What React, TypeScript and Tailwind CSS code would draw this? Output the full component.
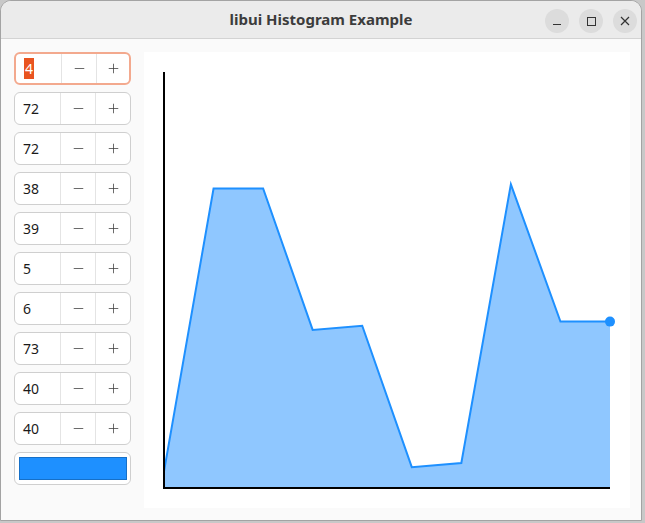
import { Minus, Plus } from 'lucide-react'

const data = [4, 72, 72, 38, 39, 5, 6, 73, 40, 40]

// chart geometry, same as the libui example: 20px offsets on each side
const W = 486
const H = 456
const gw = W - 40
const gh = H - 40

function Spin({ value, focused }: { value: number; focused?: boolean }) {
  return (
    <div
      className={`flex h-[33px] rounded-[6px] bg-white ${
        focused ? 'border-2 border-[#f3a98e]' : 'border border-[#cfcfcf]'
      }`}
    >
      <div className="flex w-[46px] items-center border-r border-[#e4e4e4] pl-[8px] text-[14px] text-[#1a1a1a]">
        {focused ? <span className="bg-[#e95420] px-px text-white">{value}</span> : value}
      </div>
      <div className="flex w-[35px] items-center justify-center border-r border-[#e4e4e4] text-[#3a3a3a]">
        <Minus size={15} strokeWidth={1.2} />
      </div>
      <div className="flex flex-1 items-center justify-center text-[#3a3a3a]">
        <Plus size={15} strokeWidth={1.2} />
      </div>
    </div>
  )
}

function Chart() {
  const pts = data.map((d, i) => [20 + (i * gw) / (data.length - 1), 20 + gh - (d * gh) / 100])
  const line = pts.map(p => `${p[0]},${p[1]}`).join(' ')
  const fill = `20,${20 + gh} ${line} ${20 + gw},${20 + gh}`
  const last = pts[pts.length - 1]
  return (
    <svg width={W} height={H} className="block">
      <polygon points={fill} fill="#8fc7ff" />
      <polyline points={line} fill="none" stroke="#1e90ff" strokeWidth={2} strokeLinejoin="miter" />
      <polyline points={`20,20 20,${20 + gh} ${20 + gw},${20 + gh}`} fill="none" stroke="#000" strokeWidth={2} />
      <circle cx={last[0]} cy={last[1]} r={5} fill="#1e90ff" />
    </svg>
  )
}

export default function App() {
  return (
    <div className="h-[523px] w-[645px] bg-[#c8c8c8]" style={{ fontFamily: '"Noto Sans", "DejaVu Sans", sans-serif' }}>
      <div className="flex h-[521px] w-[642px] flex-col overflow-hidden rounded-t-[11px] border border-[#a3a3a3] bg-[#fafafa]">
        {/* title bar */}
        <div className="relative flex h-[38px] shrink-0 items-center justify-center border-b border-[#d3d3d3] bg-[#ebebeb]">
          <span className="text-[15px] font-bold text-[#3c3c3c]">libui Histogram Example</span>
          <div className="absolute right-[4px] top-[8px] flex gap-[10px]">
            <div className="flex h-[24px] w-[24px] items-end justify-center rounded-full bg-[#dcdcdc] pb-[8px]">
              <div className="h-px w-[8px] bg-[#333]" />
            </div>
            <div className="flex h-[24px] w-[24px] items-center justify-center rounded-full bg-[#dcdcdc]">
              <div className="h-[9px] w-[9px] border border-[#333]" />
            </div>
            <div className="flex h-[24px] w-[24px] items-center justify-center rounded-full bg-[#dcdcdc]">
              <svg width="10" height="10" viewBox="0 0 10 10">
                <path d="M1 1L9 9M9 1L1 9" stroke="#333" strokeWidth="1.2" />
              </svg>
            </div>
          </div>
        </div>
        {/* body */}
        <div className="flex gap-[13px] pl-[13px] pt-[13px]">
          <div className="flex w-[117px] flex-col gap-[7px]">
            {data.map((d, i) => (
              <Spin key={i} value={d} focused={i === 0} />
            ))}
            <div className="flex h-[33px] items-center justify-center rounded-[6px] border border-[#cfcfcf] bg-white">
              <div className="h-[23px] w-[108px] border border-[#1670c8] bg-[#1e90ff]" />
            </div>
          </div>
          <div className="bg-white">
            <Chart />
          </div>
        </div>
      </div>
    </div>
  )
}
